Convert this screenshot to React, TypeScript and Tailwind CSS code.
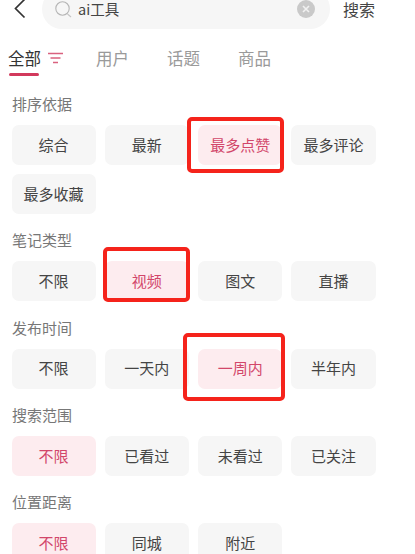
const SECTIONS = [
  { title: '排序依据', active: '最多点赞', items: ['综合', '最新', '最多点赞', '最多评论', '最多收藏'] },
  { title: '笔记类型', active: '视频', items: ['不限', '视频', '图文', '直播'] },
  { title: '发布时间', active: '一周内', items: ['不限', '一天内', '一周内', '半年内'] },
  { title: '搜索范围', active: '不限', items: ['不限', '已看过', '未看过', '已关注'] },
  { title: '位置距离', active: '不限', items: ['不限', '同城', '附近'] },
]

const TABS = ['用户', '话题', '商品']

export default function App() {
  return (
    <div className="relative h-[554px] w-[415px] overflow-hidden bg-white font-['Noto_Sans_CJK_SC',sans-serif]">

      {/* Search row */}
      <div className="-mt-[11px] flex h-[40px] items-center">
        <svg width="12" height="22" viewBox="0 0 12 22" fill="none" className="ml-[14px] shrink-0">
          <path d="M10.5 1.5 1.5 10.5 10.5 19.5" stroke="#333" strokeWidth="1.7" />
        </svg>
        <div className="ml-[16px] flex h-[40px] w-[288px] items-center rounded-[20px] bg-[#f6f6f6] pl-[12px] pr-[15px]">
          <svg width="19" height="19" viewBox="0 0 19 19" fill="none" className="shrink-0">
            <circle cx="8.5" cy="8.5" r="6.7" stroke="#b5b5b5" strokeWidth="1.1" />
            <path d="M13.5 14 17 17" stroke="#c4c4c4" strokeWidth="1.1" />
          </svg>
          <span className="ml-[5px] text-[14.5px] leading-[16px] text-[#444]">ai工具</span>
          <svg width="18" height="18" viewBox="0 0 18 18" className="ml-auto shrink-0">
            <circle cx="9" cy="9" r="9" fill="#c9c9c9" />
            <path d="M6 6 12 12M12 6 6 12" stroke="#f1f1f1" strokeWidth="1.6" />
          </svg>
        </div>
        <span className="ml-[13px] text-[16px] leading-[16px] text-[#444]">搜索</span>
      </div>

      {/* Tabs */}
      <div className="mt-[17px] flex h-[24px] items-center pl-[8px]">
        <span className="text-[16.5px] leading-[24px] text-[#333]">全部</span>
        <svg width="15" height="12" viewBox="0 0 15 12" fill="none" className="ml-[7px] shrink-0">
          <path d="M0 1.5H15M2.5 6H12.5M5 10.5H10" stroke="#d9627f" strokeWidth="1.3" />
        </svg>
        {TABS.map((t, i) => (
          <span key={t} className={`text-[16.5px] leading-[24px] text-[#9a9a9a] ${i === 0 ? 'ml-[33px]' : 'ml-[38px]'}`}>{t}</span>
        ))}
      </div>
      <div className="ml-[9px] mt-[3px] h-[3px] w-[30px] rounded-full bg-[#d2395c]" />

      {/* Filter sections */}
      <div className="mt-[17px] px-[12px]">
        {SECTIONS.map((s, i) => (
          <div key={s.title} className={i === 0 ? '' : 'mt-[15.3px]'}>
            <div className="text-[15px] leading-[22px] text-[#777]">{s.title}</div>
            <div className="mt-[10px] -ml-[0.5px] grid w-[364px] grid-cols-4 gap-x-[9.33px] gap-y-[9px]">
              {s.items.map(item => (
                <div
                  key={item}
                  className={`flex h-[40px] items-center justify-center rounded-[7px] text-[15px] ${
                    item === s.active ? 'bg-[#fdecef] text-[#d2466a]' : 'bg-[#f6f6f6] text-[#444]'
                  }`}
                >
                  {item}
                </div>
              ))}
            </div>
          </div>
        ))}
      </div>

      {/* Red annotation boxes drawn over the screenshot */}
      <div className="absolute left-[187px] top-[117px] h-[56px] w-[97px] rounded-[5px] border-[4px] border-[#f5231b]" />
      <div className="absolute left-[103px] top-[247px] h-[55px] w-[87px] rounded-[5px] border-[4px] border-[#f5231b]" />
      <div className="absolute left-[183px] top-[333px] h-[68px] w-[102px] rounded-[5px] border-[4px] border-[#f5231b]" />
    </div>
  )
}
